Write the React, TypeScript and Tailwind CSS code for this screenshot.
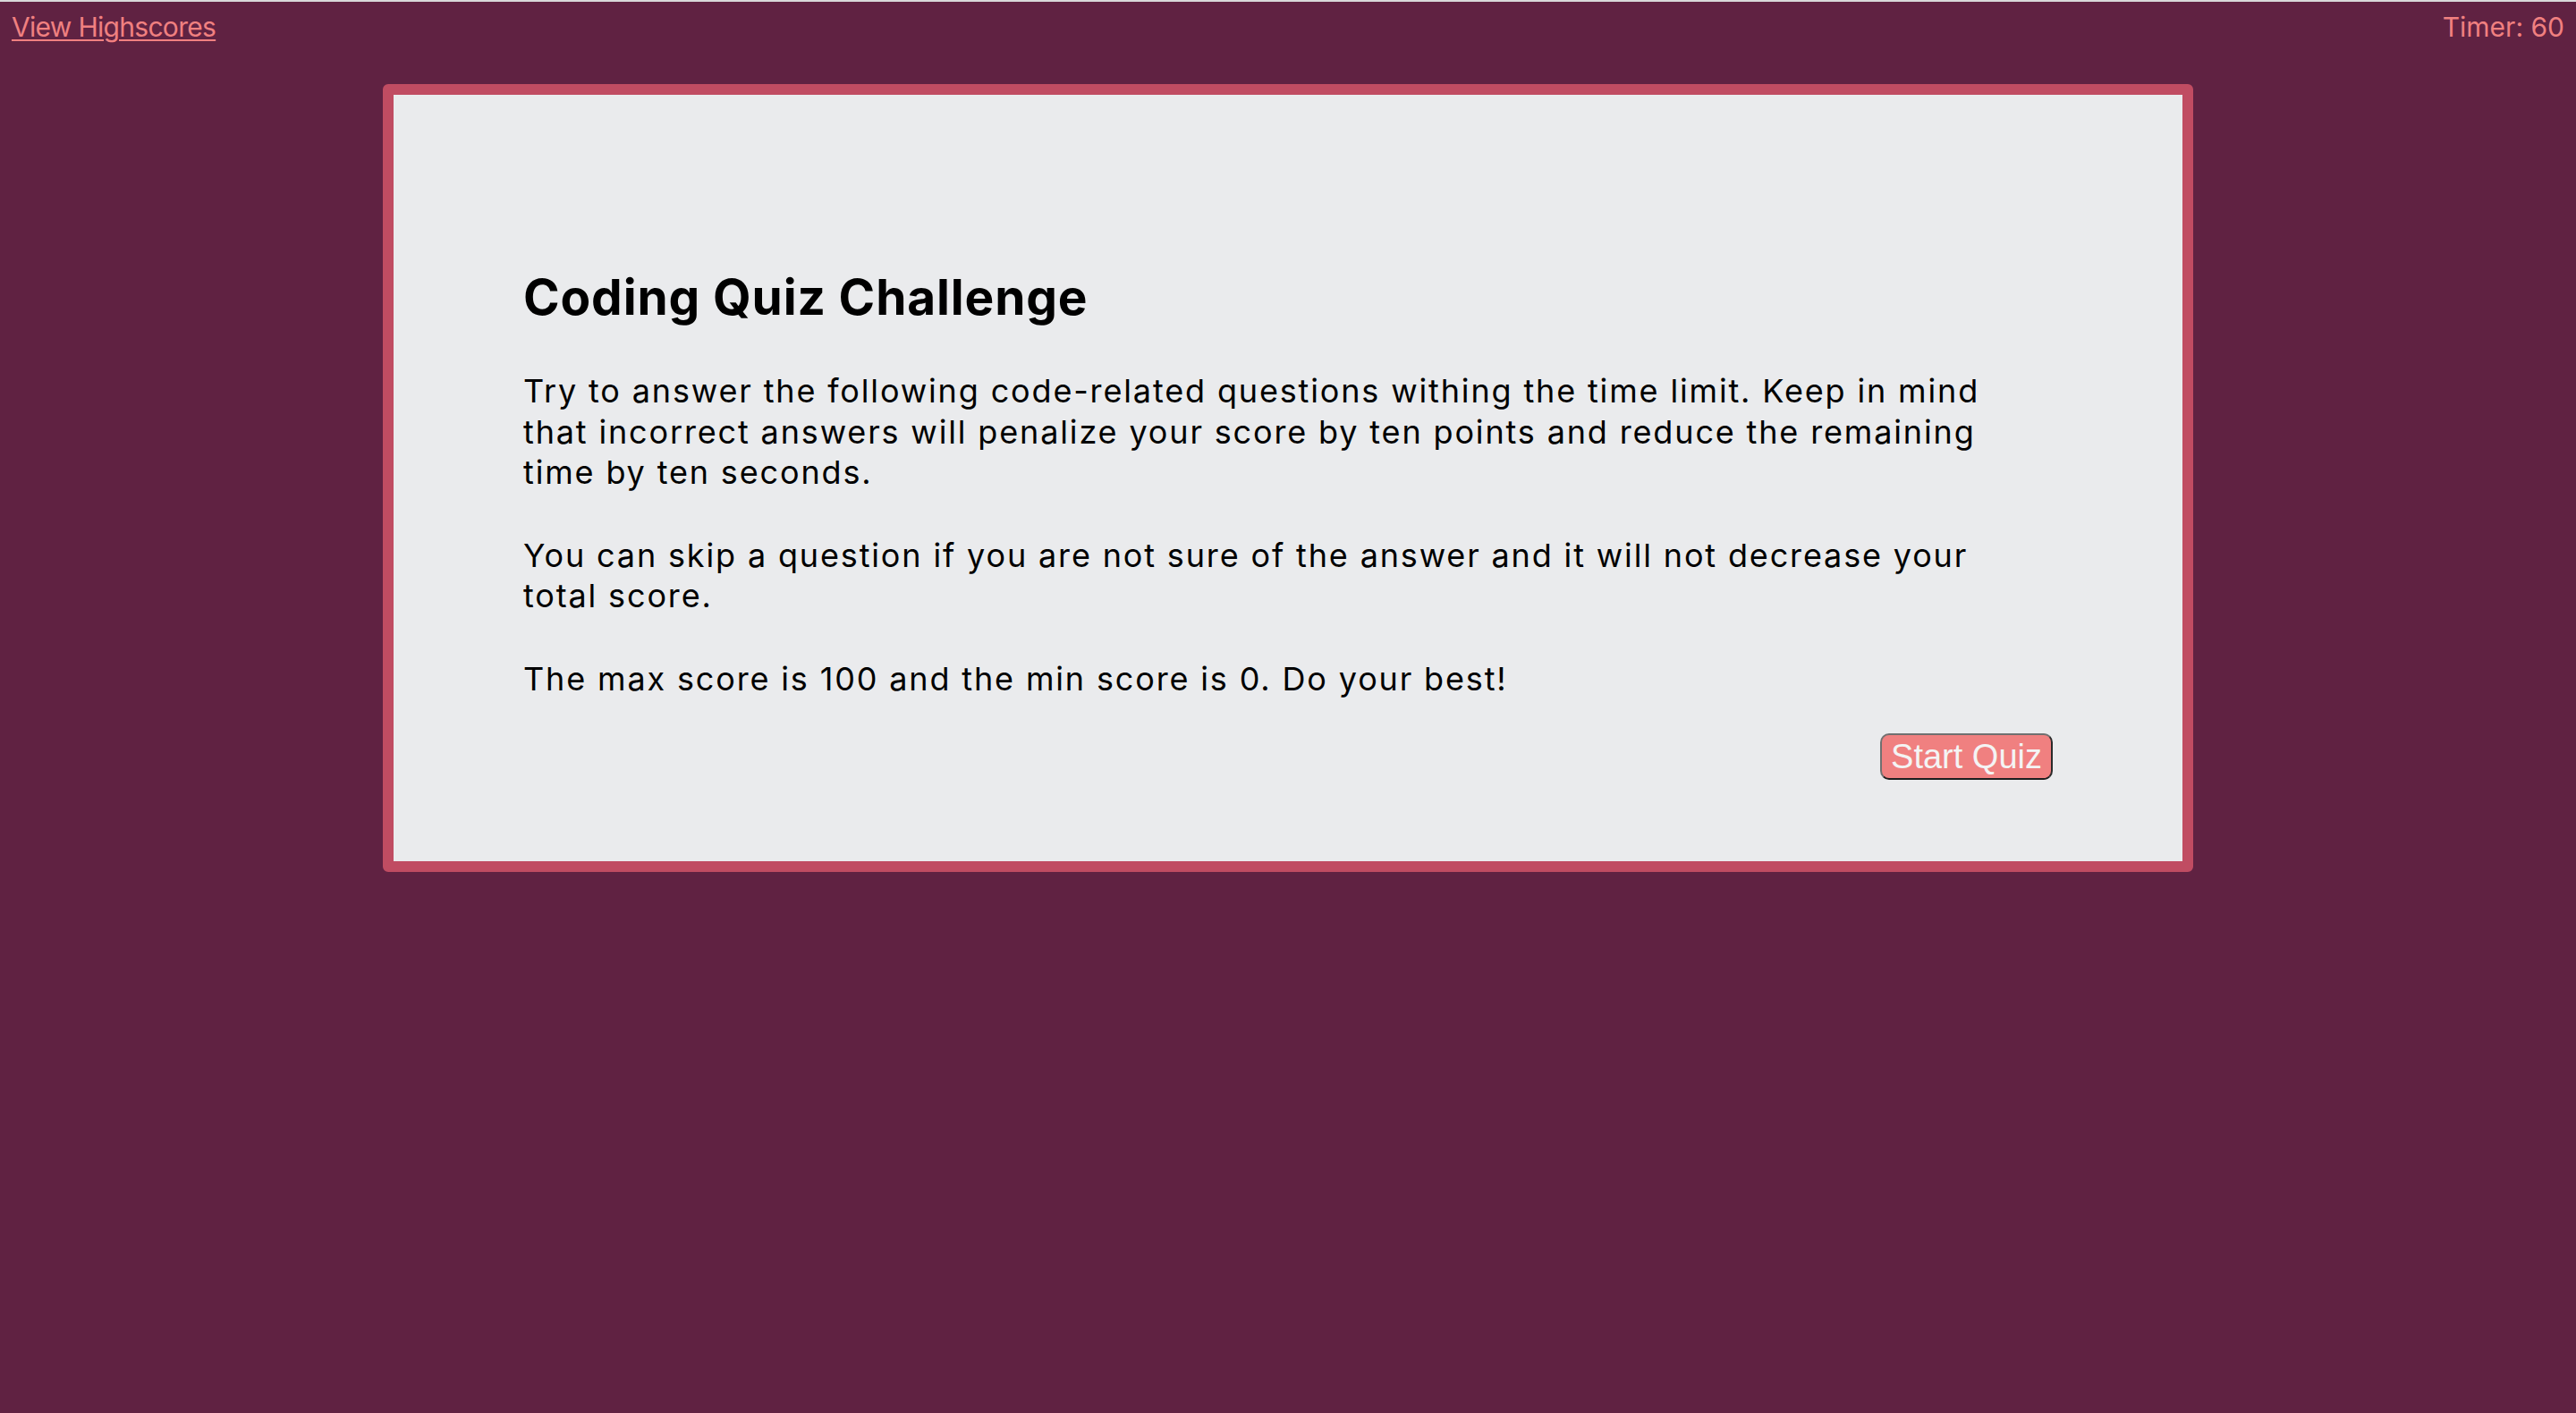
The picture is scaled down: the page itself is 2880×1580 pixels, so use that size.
// App.tsx

const bodyFont = "font-['Inter','Liberation_Sans',sans-serif]";

const Header = () => {
  return (
    <header className={`flex items-start justify-between px-[13px] pt-[10px] text-[30px] leading-[36px] text-[#f08080] ${bodyFont}`}>
      <a href="#" className="tracking-[-0.7px] underline decoration-[2px] underline-offset-[3px]">
        View Highscores
      </a>
      <span>Timer: 60</span>
    </header>
  );
};

const IntroCard = () => {
  return (
    <section className="mx-auto mt-[46px] w-[2024px] rounded-[6px] border-[12px] border-[#c04c62] bg-[#eaebed]">
      <div className={`px-[145px] pt-[193px] pb-[91px] text-black ${bodyFont}`}>
        <h1 className="text-[55px] leading-[66px] font-bold tracking-[0.85px]">
          Coding Quiz Challenge
        </h1>

        <p className="mt-[50px] text-[36px] leading-[45.5px] tracking-[1.85px]">
          Try to answer the following code-related questions withing the time limit. Keep in mind
          that incorrect answers will penalize your score by ten points and reduce the remaining
          time by ten seconds.
        </p>
        <p className="mt-[47px] text-[36px] leading-[45.5px] tracking-[1.85px]">
          You can skip a question if you are not sure of the answer and it will not decrease your
          total score.
        </p>
        <p className="mt-[47px] text-[36px] leading-[45.5px] tracking-[1.85px]">
          The max score is 100 and the min score is 0. Do your best!
        </p>

        <div className="mt-[38px] flex justify-end">
          <button
            type="button"
            className="h-[52px] rounded-[10px] border-2 border-t-[#707070] border-l-[#707070] border-r-[#2a2a2a] border-b-[#1e1e1e] bg-[#f08080] px-[10px] font-['Liberation_Sans',Arial,sans-serif] text-[38px] leading-[48px] text-[#f4f4f4]"
          >
            Start Quiz
          </button>
        </div>
      </div>
    </section>
  );
};

const App = () => {
  return (
    <div className="min-h-screen bg-[#602242]">
      <div className="h-[2px] bg-[#d9d9d9]" />
      <Header />
      <IntroCard />
    </div>
  );
};

export default App;
